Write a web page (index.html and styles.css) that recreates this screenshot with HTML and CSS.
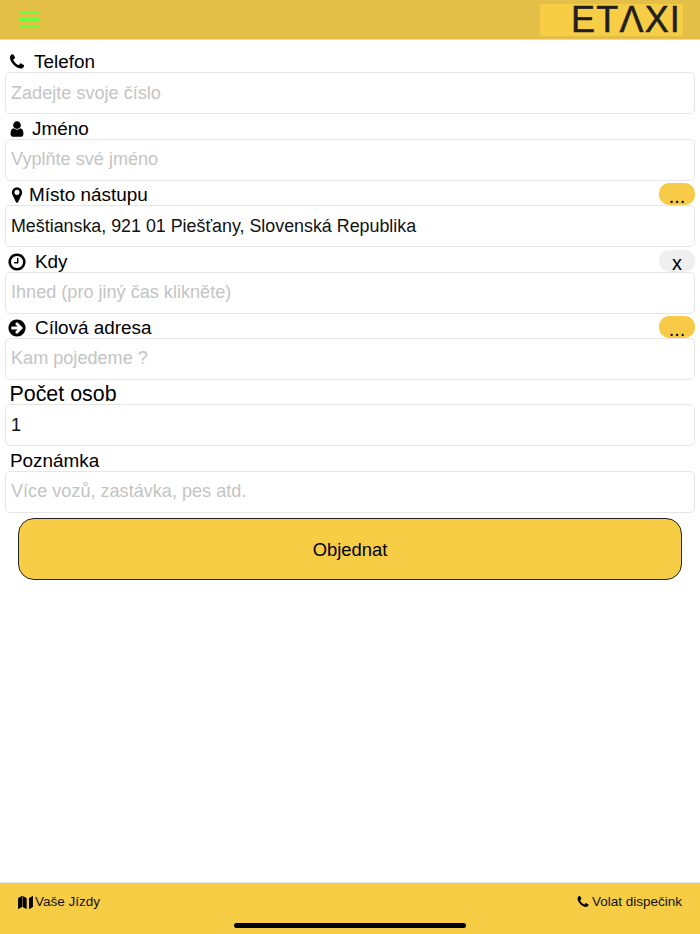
FILE: index.html
```html
<!DOCTYPE html>
<html>
<head>
    <title>ETAXI</title>
    <link rel="stylesheet" href="styles.css">
</head>
<body>
    <svg class="defs" xmlns="http://www.w3.org/2000/svg">
        <symbol id="i-phone" viewBox="0 0 1792 1792"><path d="M1600 1240q0 27-10 70.5t-21 68.5q-21 50-122 106-94 51-186 51-27 0-53-3.5t-57.5-12.5-47-14.5-55.5-20.5-49-18q-98-35-175-83-127-79-264-216t-216-264q-48-77-83-175-3-9-18-49t-20.5-55.5-14.5-47-12.5-57.5-3.5-53q0-92 51-186 56-101 106-122 25-11 68.5-21t70.5-10q14 0 21 3 18 6 53 76 11 19 30 54t35 63.5 31 53.5q3 4 17.5 25t21.5 35.5 7 28.5q0 20-28.5 50t-62 55-62 53-28.5 46q0 9 5 22.5t8.5 20.5 14 24 11.5 19q76 137 174 235t235 174q2 1 19 11.5t24 14 20.5 8.5 22.5 5q18 0 46-28.5t53-62 55-62 50-28.5q14 0 28.5 7t35.5 21.5 25 17.5q25 15 53.5 31t63.5 35 54 30q70 35 76 53 3 7 3 21z"/></symbol>
        <symbol id="i-user" viewBox="0 0 1792 1792"><path d="M1536 1399q0 109-62.5 187t-150.5 78h-854q-88 0-150.5-78t-62.5-187q0-85 8.5-160.5t31.5-152 58.5-131 94-89 134.5-34.5q131 128 313 128t313-128q76 0 134.5 34.5t94 89 58.5 131 31.5 152 8.5 160.5zm-256-887q0 159-112.5 271.5t-271.5 112.5-271.5-112.5-112.5-271.5 112.5-271.5 271.5-112.5 271.5 112.5 112.5 271.5z"/></symbol>
        <symbol id="i-marker" viewBox="0 0 1792 1792"><path d="M1152 640q0-106-75-181t-181-75-181 75-75 181 75 181 181 75 181-75 75-181zm256 0q0 109-33 179l-364 774q-16 33-47.5 52t-67.5 19-67.5-19-46.5-52l-365-774q-33-70-33-179 0-212 150-362t362-150 362 150 150 362z"/></symbol>
        <symbol id="i-clock" viewBox="0 0 1792 1792"><path d="M1024 544v448q0 14-9 23t-23 9h-320q-14 0-23-9t-9-23v-64q0-14 9-23t23-9h224v-352q0-14 9-23t23-9h64q14 0 23 9t9 23zm416 352q0-148-73-273t-198-198-273-73-273 73-198 198-73 273 73 273 198 198 273 73 273-73 198-198 73-273zm224 0q0 209-103 385.5t-279.5 279.5-385.5 103-385.5-103-279.5-279.5-103-385.5 103-385.5 279.5-279.5 385.5-103 385.5 103 279.5 279.5 103 385.5z"/></symbol>
        <symbol id="i-arrow" viewBox="0 0 1792 1792"><path d="M1413 896q0-27-18-45l-91-91-362-362q-18-18-45-18t-45 18l-91 91q-18 18-18 45t18 45l189 189h-502q-26 0-45 19t-19 45v128q0 26 19 45t45 19h502l-189 189q-19 19-19 45t19 45l91 91q18 18 45 18t45-18l362-362 91-91q18-18 18-45zm251 0q0 209-103 385.5t-279.5 279.5-385.5 103-385.5-103-279.5-279.5-103-385.5 103-385.5 279.5-279.5 385.5-103 385.5 103 279.5 279.5 103 385.5z"/></symbol>
        <symbol id="i-map" viewBox="0 0 2048 1792"><path d="M512 0q13 0 22.5 9.5t9.5 22.5v1472q0 20-17 28l-480 256q-7 4-15 4-13 0-22.5-9.5t-9.5-22.5v-1472q0-20 17-28l480-256q7-4 15-4zm1504 0q13 0 22.5 9.5t9.5 22.5v1472q0 20-17 28l-480 256q-7 4-15 4-13 0-22.5-9.5t-9.5-22.5v-1472q0-20 17-28l480-256q7-4 15-4zm-1376 0q8 0 14 3l512 256q18 10 18 29v1472q0 13-9.5 22.5t-22.5 9.5q-8 0-14-3l-512-256q-18-10-18-29v-1472q0-13 9.5-22.5t22.5-9.5z"/></symbol>
    </svg>

    <div class="page">
        <header class="topbar">
            <div class="burger"><span></span><span></span><span></span></div>
            <div class="logo">ETΛXI</div>
        </header>

        <form class="order">
            <div class="field">
                <div class="field-head">
                    <label class="lbl"><svg class="ico ico-phone"><use href="#i-phone"/></svg>Telefon</label>
                </div>
                <input class="inp" placeholder="Zadejte svoje číslo">
            </div>
            <div class="field">
                <div class="field-head">
                    <label class="lbl"><svg class="ico ico-user"><use href="#i-user"/></svg>Jméno</label>
                </div>
                <input class="inp" placeholder="Vyplňte své jméno">
            </div>
            <div class="field">
                <div class="field-head">
                    <label class="lbl"><svg class="ico ico-marker"><use href="#i-marker"/></svg>Místo nástupu</label>
                    <button type="button" class="mini">...</button>
                </div>
                <input class="inp filled" value="Meštianska, 921 01 Piešťany, Slovenská Republika">
            </div>
            <div class="field">
                <div class="field-head">
                    <label class="lbl"><svg class="ico ico-clock"><use href="#i-clock"/></svg>Kdy</label>
                    <button type="button" class="mini grey">x</button>
                </div>
                <input class="inp" placeholder="Ihned (pro jiný čas klikněte)">
            </div>
            <div class="field">
                <div class="field-head">
                    <label class="lbl"><svg class="ico ico-arrow"><use href="#i-arrow"/></svg>Cílová adresa</label>
                    <button type="button" class="mini">...</button>
                </div>
                <input class="inp" placeholder="Kam pojedeme ?">
            </div>
            <div class="field">
                <div class="field-head">
                    <label class="lbl big">Počet osob</label>
                </div>
                <input class="inp" value="1">
            </div>
            <div class="field">
                <div class="field-head">
                    <label class="lbl">Poznámka</label>
                </div>
                <input class="inp" placeholder="Více vozů, zastávka, pes atd.">
            </div>
            <button type="button" class="submit">Objednat</button>
        </form>

        <footer class="bottombar">
            <a class="foot-link"><svg class="foot-ico foot-map"><use href="#i-map"/></svg>Vaše Jízdy</a>
            <a class="foot-link"><svg class="foot-ico"><use href="#i-phone"/></svg>Volat dispečink</a>
            <div class="home-bar"></div>
        </footer>
    </div>
</body>
</html>
```

FILE: styles.css
```css
* {
    box-sizing: border-box;
}
html, body {
    margin: 0;
    height: 100%;
}
body {
    font-family: "Liberation Sans", Arial, sans-serif;
    color: #000;
    background: white;
}
.defs {
    display: none;
}
.page {
    height: 934px;
    display: flex;
    flex-direction: column;
}

.topbar {
    height: 40px;
    flex: none;
    display: flex;
    align-items: center;
    justify-content: space-between;
    padding: 0 17px 0 20px;
    background: #e3bf47;
    border-bottom: 1px solid #d9d9d9;
}
.burger {
    width: 20px;
    display: flex;
    flex-direction: column;
    gap: 4px;
}
.burger span {
    display: block;
    height: 3px;
    background: #66ff44;
}
.logo {
    width: 143px;
    height: 32px;
    padding-left: 31px;
    background: #f7cd46;
    color: #1f1f1f;
    font-size: 36px;
    line-height: 32px;
    letter-spacing: 1.2px;
    white-space: nowrap;
    -webkit-text-stroke: 0.5px #1f1f1f;
}

.order {
    flex: 1;
    padding: 8px 5px 0;
}
.field-head {
    height: 24.4px;
    display: flex;
    align-items: flex-end;
    justify-content: space-between;
}
.lbl {
    display: flex;
    align-items: center;
    margin-bottom: -1px;
    padding-left: 5px;
    font-size: 18.9px;
    line-height: 22px;
}
.big {
    padding-left: 4.5px;
    font-size: 21.4px;
}
.ico {
    width: 18px;
    height: 18px;
    margin-left: -2px;
    margin-right: 8px;
}
.ico-user {
    margin-right: 6px;
}
.ico-marker {
    margin-right: 3px;
}
.ico-clock, .ico-arrow {
    width: 20px;
    height: 20px;
    margin-left: -3px;
    margin-right: 8px;
}
.mini {
    width: 36px;
    height: 22px;
    padding: 4px 0 0;
    border: none;
    border-radius: 10px;
    background: #f7cb47;
    color: #000;
    font-family: inherit;
    font-size: 20px;
    line-height: 14px;
}
.grey {
    background: #efefef;
    padding: 5px 0 0;
}
.inp {
    display: block;
    width: 100%;
    height: 42px;
    padding: 0 5px;
    border: 1px solid #e6e6e6;
    border-radius: 5px;
    background: white;
    color: #111;
    font-family: inherit;
    font-size: 18.1px;
    outline: none;
}
.filled {
    font-size: 17.85px;
}
.inp::placeholder {
    color: #c4c4c4;
    opacity: 1;
}
.submit {
    display: block;
    width: 664px;
    height: 62px;
    margin: 5.5px auto 0;
    padding-top: 3px;
    border: 1px solid #222;
    border-radius: 16px;
    background: #f7cd46;
    color: #000;
    font-family: inherit;
    font-size: 18.4px;
}

.bottombar {
    position: relative;
    height: 52px;
    flex: none;
    display: flex;
    justify-content: space-between;
    align-items: flex-start;
    padding: 11px 18px 0 18px;
    background: #f7cd46;
    border-top: 1px solid #e6e6e6;
}
.foot-link {
    display: flex;
    align-items: center;
    font-size: 13.5px;
    line-height: 16px;
    color: #111;
}
.foot-ico {
    width: 14px;
    height: 14px;
    margin-right: 2px;
}
.foot-map {
    width: 15px;
    height: 13px;
}
.home-bar {
    position: absolute;
    left: 234px;
    bottom: 6px;
    width: 232px;
    height: 5px;
    border-radius: 3px;
    background: #000;
}
```
